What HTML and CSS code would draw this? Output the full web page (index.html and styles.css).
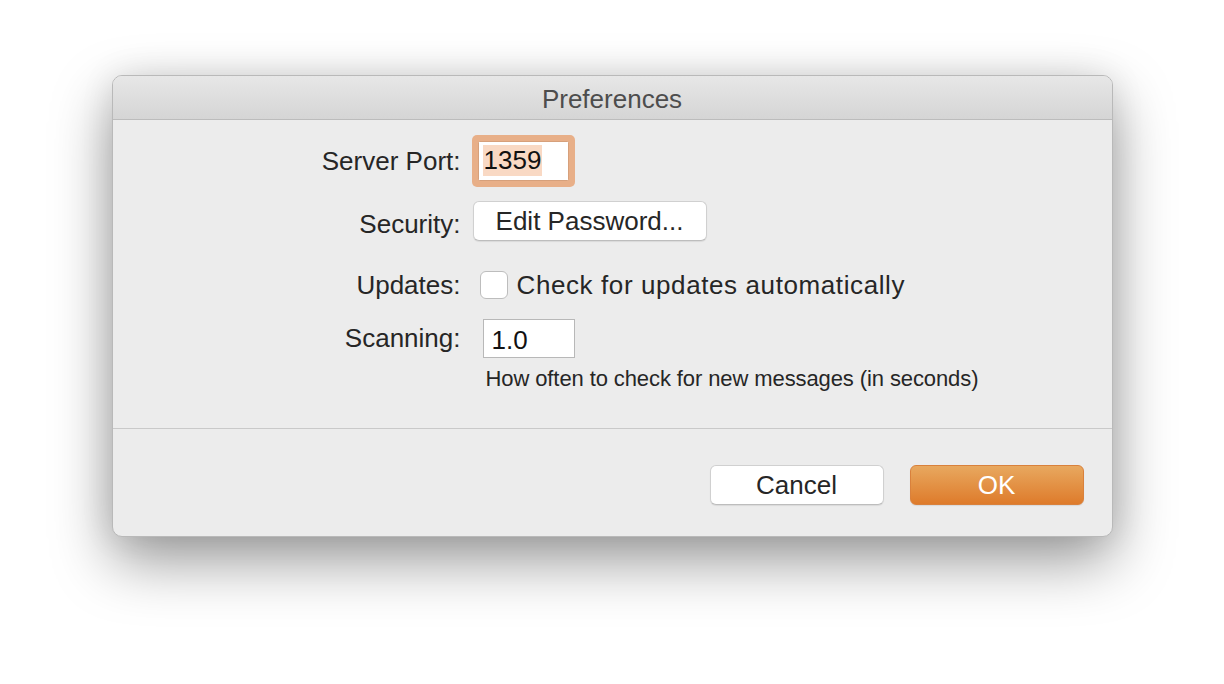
FILE: index.html
```html
<!DOCTYPE html>
<html>
<head>
<meta charset="utf-8">
<title>Preferences</title>
<link rel="stylesheet" href="styles.css">
</head>
<body>
<div class="stage">
  <div class="window">
    <div class="titlebar">Preferences</div>
    <div class="form">
      <div class="row row-port">
        <div class="label">Server Port:</div>
        <div class="field field-port"><span class="selection">1359</span></div>
      </div>
      <div class="row row-security">
        <div class="label label-low">Security:</div>
        <button class="btn btn-edit">Edit Password...</button>
      </div>
      <div class="row row-updates">
        <div class="label">Updates:</div>
        <label class="check">
          <span class="checkbox"></span>
          <span class="check-text">Check for updates automatically</span>
        </label>
      </div>
      <div class="row row-scan">
        <div class="label">Scanning:</div>
        <div class="field field-scan">1.0</div>
      </div>
      <div class="row row-hint">
        <div class="label"></div>
        <div class="hint">How often to check for new messages (in seconds)</div>
      </div>
    </div>
    <div class="footer">
      <button class="btn btn-dialog">Cancel</button>
      <button class="btn btn-dialog btn-ok">OK</button>
    </div>
  </div>
</div>
</body>
</html>
```

FILE: styles.css
```css
html, body {
  margin: 0;
  padding: 0;
  background: #ffffff;
}

body {
  font-family: "Liberation Sans", Arial, sans-serif;
  color: #262626;
}

.stage {
  height: 684px;
  box-sizing: border-box;
  padding-top: 75px;
  display: flex;
  justify-content: center;
  align-items: flex-start;
}

.window {
  width: 1001px;
  height: 462px;
  box-sizing: border-box;
  background: #ececec;
  border-radius: 10px;
  border: 1px solid #b9b9b9;
  box-shadow: 0 24px 60px rgba(0, 0, 0, 0.40), 0 0 34px rgba(0, 0, 0, 0.09);
  display: flex;
  flex-direction: column;
  overflow: hidden;
}

.titlebar {
  height: 43px;
  flex: none;
  background: linear-gradient(#e7e7e7, #d5d5d5);
  border-bottom: 1px solid #bcbcbc;
  text-align: center;
  font-size: 26px;
  line-height: 46px;
  color: #4d4d4d;
}

.form {
  flex: none;
  height: 308px;
  box-sizing: border-box;
  padding-top: 15px;
  display: flex;
  flex-direction: column;
}

.row {
  display: flex;
  align-items: center;
  font-size: 26px;
}

.label {
  width: 348px;
  flex: none;
  text-align: right;
  box-sizing: border-box;
  white-space: nowrap;
}

.row-port .label {
  padding-top: 2px;
}

.label-low {
  padding-top: 7px;
}

.row-port { height: 51px; }
.row-security { height: 40px; margin-top: 15px; }
.row-updates { height: 40px; margin-top: 24px; }
.row-scan { height: 39px; margin-top: 14px; }
.row-hint { height: 22px; margin-top: 10px; }

.field {
  background: #ffffff;
  box-sizing: border-box;
  color: #111111;
  font-size: 26px;
  display: flex;
  align-items: center;
}

.field-port {
  width: 91px;
  height: 40px;
  margin-left: 17px;
  border: 1px solid #d6a07b;
  box-shadow: 0 0 0 6px #e8af88;
  border-radius: 1.5px;
  padding-left: 4px;
}

.selection {
  background: #f9d9c4;
  line-height: 31px;
  padding: 0 1px;
}

.btn {
  font-family: "Liberation Sans", Arial, sans-serif;
  font-size: 26px;
  color: #262626;
  background: #ffffff;
  border: 1px solid #d0d0d0;
  border-bottom-color: #bdbdbd;
  border-radius: 6px;
  box-shadow: 0 1px 1px rgba(0, 0, 0, 0.08);
  padding: 0;
  margin: 0;
  height: 40px;
  cursor: default;
}

.btn-edit {
  width: 234px;
  margin-left: 12px;
  line-height: 36px;
}

.check {
  display: flex;
  align-items: center;
  margin-left: 19px;
}

.checkbox {
  width: 28px;
  height: 28px;
  box-sizing: border-box;
  background: #ffffff;
  border: 1px solid #bdbdbd;
  border-radius: 6px;
  margin-top: -1px;
}

.check-text {
  margin-left: 9px;
  letter-spacing: 0.6px;
}

.field-scan {
  width: 92px;
  height: 39px;
  margin-left: 22px;
  border: 1px solid #b8b8b8;
  padding-left: 8px;
  padding-top: 3px;
}

.hint {
  margin-left: 25px;
  font-size: 22px;
  letter-spacing: -0.1px;
  white-space: nowrap;
}

.footer {
  flex: 1;
  border-top: 1px solid #c9c9c9;
  display: flex;
  justify-content: flex-end;
  align-items: flex-start;
  padding-top: 36px;
  padding-right: 28px;
  gap: 26px;
}

.btn-dialog {
  width: 174px;
}

.btn-ok {
  background: linear-gradient(#e8a85f, #de7b2b);
  border: 1px solid #d9813c;
  color: #ffffff;
}
```
